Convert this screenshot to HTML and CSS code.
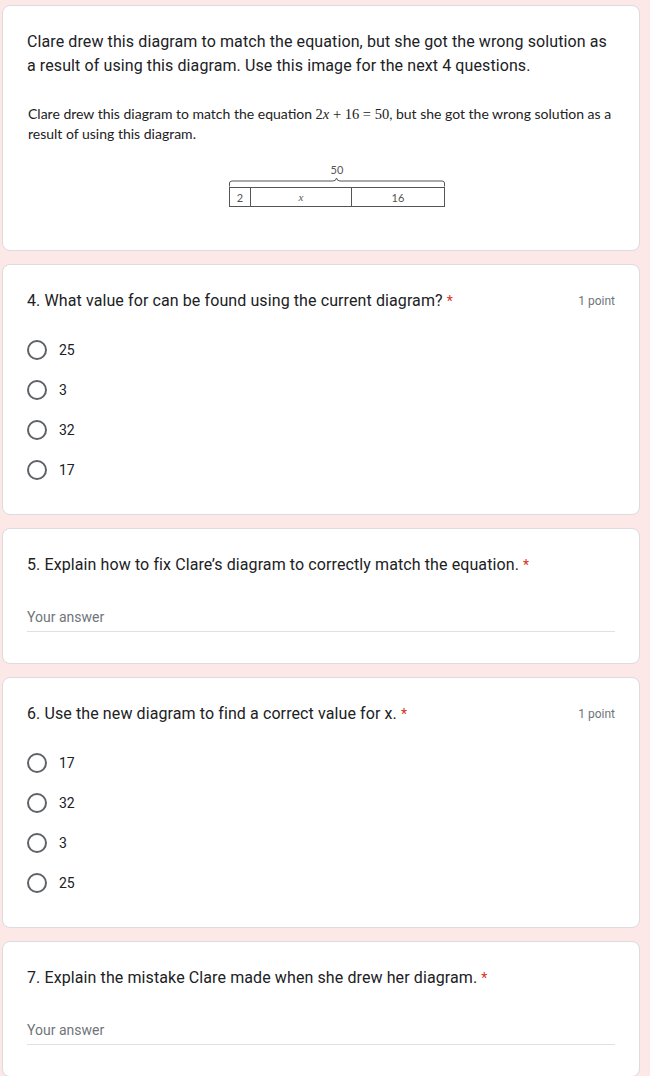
FILE: index.html
```html
<!DOCTYPE html>
<html lang="en">
<head>
<meta charset="utf-8">
<title>Quiz</title>
<link rel="stylesheet" href="styles.css">
</head>
<body>
<main class="page">
  <section class="card">
    <div class="desc">Clare drew this diagram to match the equation, but she got the wrong solution as a result of using this diagram. Use this image for the next 4 questions.</div>
    <div class="figure">
      <p class="fig-text">Clare drew this diagram to match the equation <span class="math">2<i>x</i> + 16 = 50</span>, but she got the wrong solution as a result of using this diagram.</p>
      <div class="diagram">
        <div class="total">50</div>
        <svg class="brace" width="216" height="10" viewBox="0 0 216 10">
          <path d="M0.5 9.5 V6 Q0.5 4 3 4 H104 Q107 4 107.5 1 Q108 4 111 4 H213 Q215.5 4 215.5 6 V9.5" fill="none" stroke="#555" stroke-width="1"/>
        </svg>
        <div class="bar">
          <div class="cell c1">2</div>
          <div class="cell c2"><i>x</i></div>
          <div class="cell c3">16</div>
        </div>
      </div>
    </div>
  </section>

  <section class="card">
    <div class="q-head">
      <div class="q-title">4. What value for can be found using the current diagram? <span class="req">*</span></div>
      <div class="points">1 point</div>
    </div>
    <div class="options">
      <label class="opt"><span class="radio"></span><span class="opt-label">25</span></label>
      <label class="opt"><span class="radio"></span><span class="opt-label">3</span></label>
      <label class="opt"><span class="radio"></span><span class="opt-label">32</span></label>
      <label class="opt"><span class="radio"></span><span class="opt-label">17</span></label>
    </div>
  </section>

  <section class="card">
    <div class="q-head">
      <div class="q-title">5. Explain how to fix Clare’s diagram to correctly match the equation. <span class="req">*</span></div>
    </div>
    <div class="answer">Your answer</div>
  </section>

  <section class="card">
    <div class="q-head">
      <div class="q-title">6. Use the new diagram to find a correct value for x. <span class="req">*</span></div>
      <div class="points">1 point</div>
    </div>
    <div class="options">
      <label class="opt"><span class="radio"></span><span class="opt-label">17</span></label>
      <label class="opt"><span class="radio"></span><span class="opt-label">32</span></label>
      <label class="opt"><span class="radio"></span><span class="opt-label">3</span></label>
      <label class="opt"><span class="radio"></span><span class="opt-label">25</span></label>
    </div>
  </section>

  <section class="card">
    <div class="q-head">
      <div class="q-title">7. Explain the mistake Clare made when she drew her diagram. <span class="req">*</span></div>
    </div>
    <div class="answer">Your answer</div>
  </section>
</main>
</body>
</html>
```

FILE: styles.css
```css
html, body {
  margin: 0;
  padding: 0;
  background: #fce8e6;
}

body {
  font-family: Roboto, "Open Sans", Arial, sans-serif;
  color: #202124;
}

.page {
  width: 638px;
  margin-left: 2px;
  padding-top: 5px;
  display: flex;
  flex-direction: column;
  gap: 13px;
}

.card {
  background: #fff;
  border: 1px solid #dadce0;
  border-radius: 8px;
  padding: 24px;
}

.desc {
  font-size: 16px;
  line-height: 24px;
  letter-spacing: 0.1px;
}

.figure {
  margin-top: 26px;
  padding-left: 1px;
  padding-bottom: 19px;
}

.fig-text {
  margin: 0;
  font-family: Lato, "Open Sans", sans-serif;
  font-size: 14px;
  line-height: 19px;
  color: #222;
}

.math {
  font-family: "Liberation Serif", "Times New Roman", serif;
  font-size: 14.5px;
}

.diagram {
  width: 216px;
  margin-left: 201px;
  margin-top: 20px;
  font-family: Lato, "Open Sans", sans-serif;
  color: #555;
}

.total {
  text-align: center;
  font-size: 11px;
  line-height: 14px;
}

.brace {
  display: block;
}

.bar {
  display: flex;
  height: 20px;
  border: 1px solid #555;
  box-sizing: border-box;
  font-size: 11px;
}

.cell {
  display: flex;
  align-items: center;
  justify-content: center;
}

.c1 { width: 20px; border-right: 1px solid #555; }
.c2 { width: 100px; border-right: 1px solid #555; }
.c3 { flex: 1; }
.c2 i { font-family: "Liberation Serif", serif; font-size: 11px; }

.q-head {
  display: flex;
  justify-content: space-between;
  align-items: flex-start;
  gap: 16px;
}

.q-title {
  font-size: 16px;
  line-height: 24px;
  letter-spacing: 0.1px;
}

.req {
  color: #d93025;
  font-size: 14px;
}

.points {
  flex: none;
  font-size: 12px;
  line-height: 24px;
  color: #70757a;
}

.options {
  margin-top: 17px;
  display: flex;
  flex-direction: column;
}

.opt {
  display: flex;
  align-items: center;
  height: 40px;
}

.radio {
  box-sizing: border-box;
  width: 20px;
  height: 20px;
  border: 2px solid #5f6368;
  border-radius: 50%;
  flex: none;
}

.opt-label {
  margin-left: 12px;
  font-size: 14px;
  color: #202124;
}

.answer {
  margin-top: 30px;
  margin-bottom: 7px;
  font-size: 14px;
  line-height: 20px;
  color: #70757a;
  padding-bottom: 4px;
  border-bottom: 1px solid #e0e0e0;
}
```
